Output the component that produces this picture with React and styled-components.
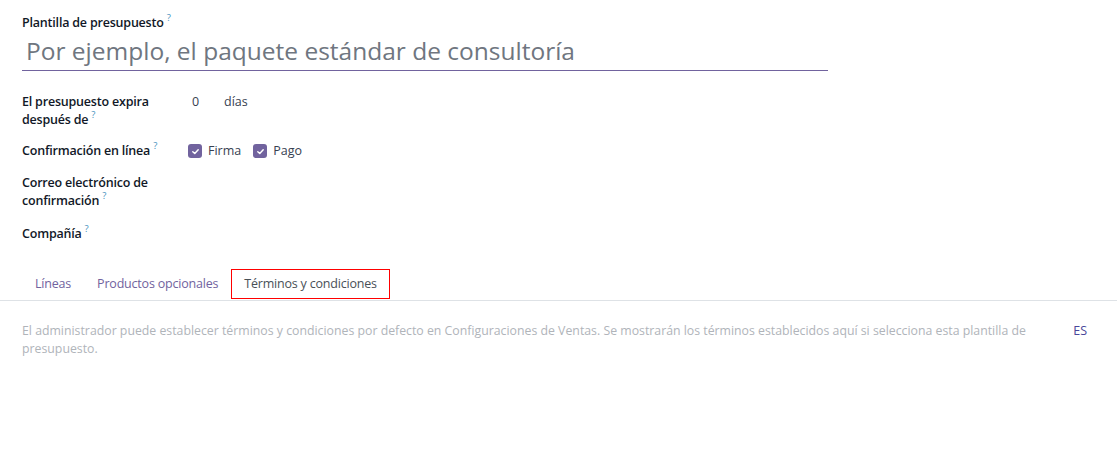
import React from "react";
import styled, { createGlobalStyle } from "styled-components";

const GlobalStyle = createGlobalStyle`
  body {
    margin: 0;
    background: #fff;
    font-family: "Open Sans", "Noto Sans", sans-serif;
    color: #212529;
  }
`;

const Sheet = styled.div`
  width: 1117px;
  height: 453px;
  background: #fff;
  overflow: hidden;
`;

const Header = styled.div`
  padding: 14px 0 0 22px;
`;

const TitleLabel = styled.label`
  display: block;
  font-size: 12.5px;
  font-weight: 600;
  letter-spacing: -0.2px;
  line-height: 18px;
  color: #111827;
`;

const Help = styled.sup`
  font-size: 9.5px;
  font-weight: 400;
  line-height: 0;
  color: #3f8fbd;
  margin-left: 3px;
  vertical-align: 6px;
`;

const TitleInput = styled.input`
  display: block;
  width: 806px;
  box-sizing: border-box;
  margin-top: 1px;
  padding: 0 4px 2px;
  border: none;
  border-bottom: 1px solid #71639e;
  outline: none;
  font-family: inherit;
  font-size: 24.5px;
  line-height: 35px;
  color: #374151;
  background: transparent;
  &::placeholder {
    color: #6f7680;
  }
`;

const Fields = styled.div`
  display: grid;
  grid-template-columns: 166px 1fr;
  row-gap: 13px;
  padding: 22px 0 0 22px;
`;

const FieldLabel = styled.div`
  font-size: 12.5px;
  font-weight: 600;
  letter-spacing: -0.2px;
  line-height: 18px;
  color: #111827;
  width: 150px;
  padding-bottom: ${(p) => p.extra || 0}px;
`;

const FieldValue = styled.div`
  display: flex;
  align-items: flex-start;
  min-height: 19px;
  font-size: 12.5px;
  line-height: 18px;
  color: #374151;
`;

const Num = styled.span`
  padding-left: 4px;
  width: 32px;
`;

const Check = styled.label`
  display: flex;
  align-items: center;
  gap: 6px;
  margin-right: 12px;
  color: #374151;
`;

const Box = styled.span`
  display: inline-flex;
  align-items: center;
  justify-content: center;
  width: 14px;
  height: 14px;
  border-radius: 3px;
  background: #71639e;
`;

const Tabs = styled.div`
  display: flex;
  margin-top: 25px;
  padding-left: 22px;
  border-bottom: 1px solid #dee2e6;
`;

const Tab = styled.div`
  padding: 5px 12px 5px;
  font-size: 12.5px;
  letter-spacing: -0.2px;
  line-height: 18px;
  color: ${(p) => (p.active ? "#495057" : "#71639e")};
  border: 1px solid ${(p) => (p.active ? "#ff0000" : "transparent")};
  margin-bottom: 1px;
  background: #fff;
`;

const Content = styled.div`
  display: flex;
  align-items: flex-start;
  padding: 21px 30px 0 22px;
`;

const Note = styled.p`
  flex: 1;
  margin: 0;
  max-width: 1012px;
  font-size: 12.3px;
  line-height: 18px;
  color: #b0b4ba;
`;

const Lang = styled.span`
  margin-left: auto;
  font-size: 12.5px;
  font-weight: 500;
  line-height: 18px;
  color: #4a479a;
`;

const CheckIcon = () => (
  <svg width="9" height="9" viewBox="0 0 10 10">
    <path d="M2 5.2 L4.2 7.2 L8 3" fill="none" stroke="#fff" strokeWidth="1.6" strokeLinecap="round" strokeLinejoin="round" />
  </svg>
);

export default function App() {
  return (
    <Sheet>
      <GlobalStyle />
      <Header>
        <TitleLabel>
          Plantilla de presupuesto<Help>?</Help>
        </TitleLabel>
        <TitleInput placeholder="Por ejemplo, el paquete estándar de consultoría" />
      </Header>
      <Fields>
        <FieldLabel>
          El presupuesto expira después de<Help>?</Help>
        </FieldLabel>
        <FieldValue>
          <Num>0</Num>
          <span>días</span>
        </FieldValue>
        <FieldLabel>
          Confirmación en línea<Help>?</Help>
        </FieldLabel>
        <FieldValue>
          <Check>
            <Box>
              <CheckIcon />
            </Box>
            Firma
          </Check>
          <Check>
            <Box>
              <CheckIcon />
            </Box>
            Pago
          </Check>
        </FieldValue>
        <FieldLabel extra={2}>
          Correo electrónico de confirmación<Help>?</Help>
        </FieldLabel>
        <FieldValue />
        <FieldLabel>
          Compañía<Help>?</Help>
        </FieldLabel>
        <FieldValue />
      </Fields>
      <Tabs>
        <Tab>Líneas</Tab>
        <Tab>Productos opcionales</Tab>
        <Tab active>Términos y condiciones</Tab>
      </Tabs>
      <Content>
        <Note>
          El administrador puede establecer términos y condiciones por defecto en Configuraciones de Ventas. Se
          mostrarán los términos establecidos aquí si selecciona esta plantilla de presupuesto.
        </Note>
        <Lang>ES</Lang>
      </Content>
    </Sheet>
  );
}
